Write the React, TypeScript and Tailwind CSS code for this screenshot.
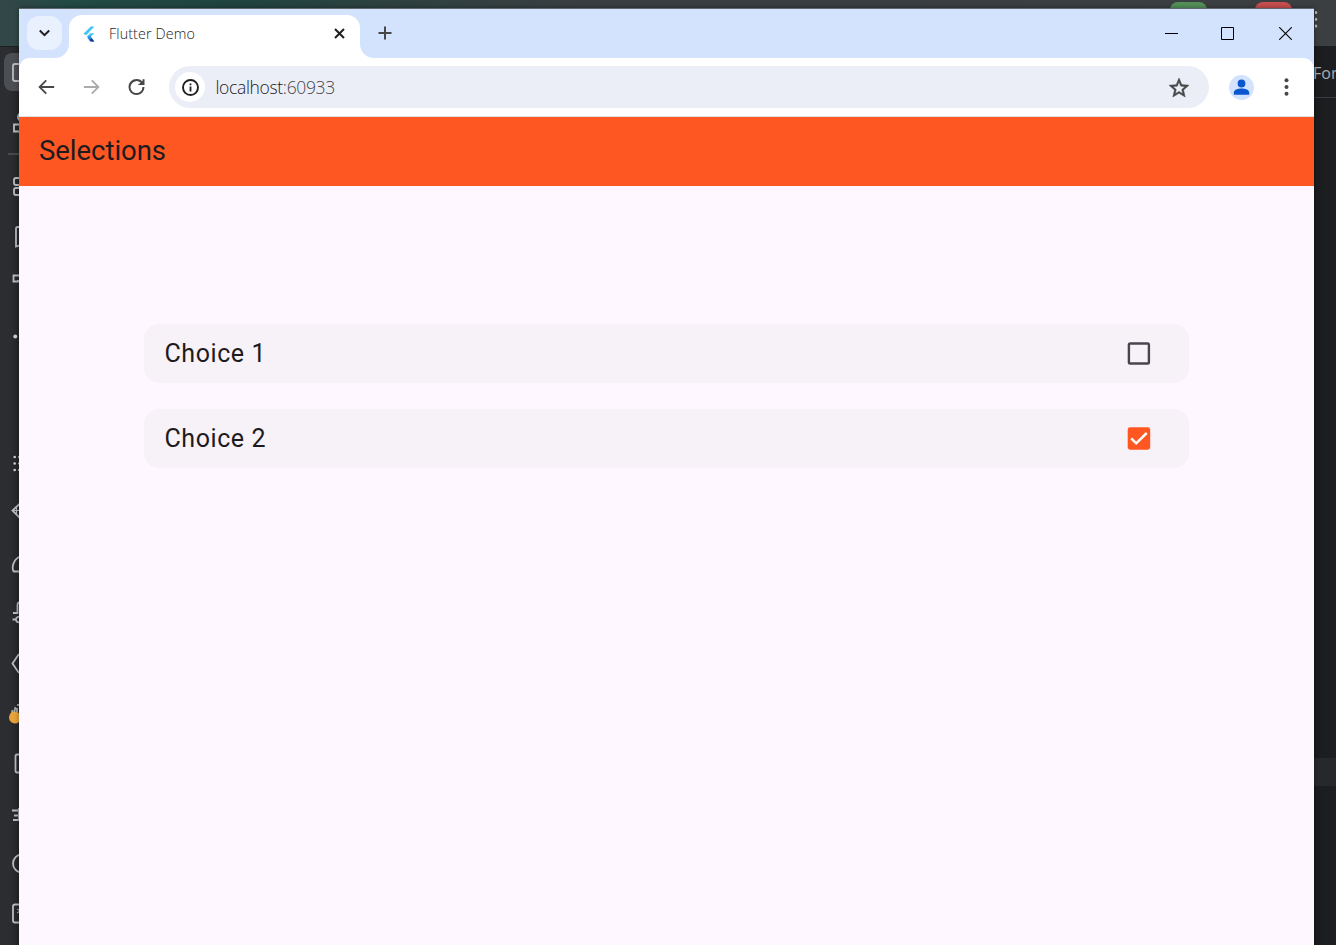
import React from "react";

type RailSlot = { top: number; height: number; art: React.ReactNode };

const railSlots: RailSlot[] = [
  {
    top: 46,
    height: 52,
    art: (
      <>
        <rect x="4" y="53" width="38" height="38" rx="8" fill="#4b4e53" stroke="none" />
        <rect x="13" y="64" width="18" height="17" rx="2" />
      </>
    ),
  },
  {
    top: 98,
    height: 48,
    art: (
      <>
        <circle cx="22" cy="117" r="4" />
        <path d="M20 124.5h-6v7h6" />
      </>
    ),
  },
  { top: 146, height: 16, art: <path d="M8 154h20" stroke="#4a4c50" /> },
  {
    top: 162,
    height: 50,
    art: (
      <>
        <rect x="14" y="178" width="8" height="7" rx="2" />
        <rect x="14" y="188" width="8" height="7" rx="2" />
      </>
    ),
  },
  { top: 212, height: 46, art: <path d="M19 227h-1.5q-1.5 0-1.5 2v17.5l3-1" /> },
  { top: 258, height: 42, art: <path d="M19 275.5h-5.5v6H18v-1.5" /> },
  { top: 300, height: 140, art: <circle cx="15.3" cy="336.5" r="2" fill="#ced0d6" stroke="none" /> },
  {
    top: 440,
    height: 46,
    art: (
      <g fill="#ced0d6" stroke="none">
        <circle cx="14.7" cy="457" r="1.3" />
        <circle cx="14.7" cy="463.5" r="1.3" />
        <circle cx="14.7" cy="470" r="1.3" />
        <circle cx="19" cy="457" r="1" />
        <circle cx="19" cy="463.5" r="1" />
        <circle cx="19" cy="470" r="1" />
      </g>
    ),
  },
  {
    top: 486,
    height: 51,
    art: (
      <>
        <path d="M19.5 504l-7 6.5 7 7" />
        <path d="M13 510.5h7M16.5 507v7" strokeWidth="1.2" />
      </>
    ),
  },
  { top: 537, height: 51, art: <path d="M20 556.5q-5 2-7 8.5-1 5 1 6.5h6" /> },
  {
    top: 588,
    height: 50,
    art: <path d="M19 602.5q-1.5 0-1.5 3v7.500H13M12.5 619.5h4M20 616.5q-4 0-4 3t4 3" />,
  },
  { top: 638, height: 50, art: <path d="M19 654l-6.5 9.5L19 673" /> },
  {
    top: 688,
    height: 50,
    art: (
      <>
        <path d="M11.5 715l1-5M14 713l1.5-6M17 712v-4M18 706v-2" stroke="#a6a8ac" />
        <circle cx="15" cy="717.5" r="6" fill="#e8a33d" stroke="none" />
      </>
    ),
  },
  { top: 738, height: 51, art: <path d="M20 754.5h-3q-1.5 0-1.5 2v14q0 2 1.5 2h3" /> },
  { top: 789, height: 50, art: <path d="M12 810.500h6M14 815.500h4M13 820h5M19 808v13" /> },
  { top: 839, height: 49, art: <circle cx="22" cy="863.5" r="9" /> },
  {
    top: 888,
    height: 57,
    art: (
      <>
        <rect x="13" y="904.5" width="18" height="18" rx="2" />
        <path d="M17 909l3 2-3 2" strokeWidth="1" />
      </>
    ),
  },
];

function IdeBackdrop() {
  return (
    <div className="flex h-full flex-col">
      <div className="flex h-[46px] shrink-0 justify-end bg-[linear-gradient(90deg,#334747_0%,#234a46_5%,#20443f_18%,#304141_31%,#3a3f41_45%,#3c3f41_100%)]">
        <div className="mt-[2px] mr-[48px] h-8 w-[37px] rounded-lg bg-[#549159]" />
        <div className="mt-[2px] mr-[23.5px] h-8 w-[37px] rounded-lg bg-[#c94f4f]" />
        <svg className="mt-[2px] h-9 w-[21px]" viewBox="1315 2 21 36" fill="#b9bcbf">
          <circle cx="1315.8" cy="12.5" r="1.5" />
          <circle cx="1315.8" cy="19.3" r="1.5" />
          <circle cx="1315.8" cy="26" r="1.5" />
        </svg>
      </div>
      <div className="flex min-h-0 flex-1 justify-between bg-[#1e1f22]">
        <div className="flex w-[19px] flex-col overflow-hidden border-t border-[#1e1f22] bg-[linear-gradient(90deg,#2b2d30,#2b2d30_50%,#242628)]">
          {railSlots.map(({ top, height, art }) => (
            <svg
              key={top}
              className="-mt-px mb-px w-[19px] shrink-0"
              height={height}
              viewBox={`0 ${top} 19 ${height}`}
              fill="none"
              stroke="#b9bbc0"
              strokeWidth="1.8"
            >
              {art}
            </svg>
          ))}
        </div>
        <div className="flex w-[22px] flex-col overflow-hidden bg-[linear-gradient(90deg,#1a1b1d,#1e1f22)]">
          <div className="flex h-[52px] items-center border-b border-[#393b40] font-['Open_Sans',sans-serif] text-[16px] whitespace-nowrap text-[#a9abad]">
            <span className="-ml-px pt-[3px]">For</span>
          </div>
          <div className="mt-[660px] h-[28px] bg-[#26282c]" />
        </div>
      </div>
    </div>
  );
}

function FlutterLogo() {
  return (
    <svg className="h-4 w-3" viewBox="0 0 12 16">
      <path d="M7.8.4h3.7L3.4 8.900.2 8z" fill="#44c5f5" />
      <path d="M7.5 7.2h3.8L8 10.6l-2.8 1-1.5-1z" fill="#44c5f5" />
      <path d="M5.4 10.7l1.8-1.2 4.1 5.9H7.7L4.3 12z" fill="#2a8fe0" />
      <path d="M6 13.7l3.2-1 2.1 2.7H7.7z" fill="#0d3c91" />
    </svg>
  );
}

function TabStrip() {
  return (
    <div className="flex h-[49px] shrink-0 items-start bg-[#d3e3fd] pl-2">
      <button className="mt-[7px] flex h-[34px] w-[35px] items-center justify-center rounded-xl bg-[#e9f1fe]">
        <svg className="h-[8px] w-[12px]" viewBox="0.5 0 12 8" fill="none" stroke="#1f1f1f" strokeWidth="2">
          <path d="M1.300 1.5L6 6.2l4.700-4.700" />
        </svg>
      </button>
      <div className="relative mt-[6px] ml-[7px] flex h-[43px] w-[290.5px] items-center rounded-t-[13px] bg-white pr-[14px] pb-[6px] pl-[14px]">
        <svg className="absolute bottom-0 -left-[14px] size-[14px]" viewBox="0 0 14 14" fill="#fff">
          <path d="M14 0v14H0A14 14 0 0014 0z" />
        </svg>
        <svg className="absolute -right-[14px] bottom-0 size-[14px]" viewBox="0 0 14 14" fill="#fff">
          <path d="M0 0v14h14A14 14 0 010 0z" />
        </svg>
        <FlutterLogo />
        <span className="ml-[14px] flex-1 font-['Open_Sans',sans-serif] text-[14.3px] font-[350] tracking-[0.12px] text-[#1a1a1a]">
          Flutter Demo
        </span>
        <svg className="mr-[1px] size-[11px]" viewBox="0 0 11 11" stroke="#1f1f1f" strokeWidth="2">
          <path d="M1 1l9 9M10 1l-9 9" />
        </svg>
      </div>
      <svg className="mt-[17px] ml-[18px] size-[14px]" viewBox="0 0 14 14" stroke="#474747" strokeWidth="2">
        <path d="M7 .5v13M.5 7h13" />
      </svg>
      <div className="ml-auto flex pt-[18px] pr-[22px]">
        <svg className="mr-[43px] size-[13px]" viewBox="0 0 13 13" stroke="#000">
          <path d="M0 6.5h13" />
        </svg>
        <svg className="mr-[45px] size-[13px]" viewBox="0 0 13 13" fill="none" stroke="#000">
          <path d="M.5.5h12v12H.5z" />
        </svg>
        <svg className="size-[13px]" viewBox="0 0 13 13" stroke="#000" strokeWidth="1.1">
          <path d="M.2.2l12.6 12.6M12.8.2L.2 12.8" />
        </svg>
      </div>
    </div>
  );
}

function Toolbar() {
  return (
    <div className="h-[59px] shrink-0 bg-[#d3e3fd]">
      <div className="flex h-full items-start rounded-t-[11px] border-b border-[#dfe1e5] bg-white pt-2">
        <div className="flex h-[42px] flex-1 items-center pl-[17px]">
          <svg className="size-5" viewBox="0 0 24 24" fill="#474747">
            <path d="M21.8 10.9H7.1l6-6L11.5 3.3 2.8 12l8.7 8.7 1.6-1.6-6-6h14.7z" />
          </svg>
          <svg className="ml-[26px] size-5" viewBox="0 0 24 24" fill="#ababab">
            <path d="M2.2 10.9h14.7l-6-6 1.6-1.6 8.7 8.7-8.7 8.7-1.6-1.6 6-6H2.200z" />
          </svg>
          <svg className="ml-[22px] size-[24px]" viewBox="-0.5 0 24 24" fill="#474747">
            <path d="M12 4a8 8 0 108 8h-2a6 6 0 11-1.8-4.2L13.2 10H20V4.2h-2v2.2A8 8 0 0012 4z" />
          </svg>
          <div className="ml-[21px] flex h-[42px] w-[1040px] items-center rounded-full bg-[#ebeef7] pr-[18px] pl-[6px]">
            <span className="flex size-[30px] items-center justify-center rounded-full bg-white">
              <svg className="size-[17px]" viewBox="0 0 17 17">
                <circle cx="8.5" cy="8.5" r="7.5" fill="none" stroke="#1f1f1f" strokeWidth="1.9" />
                <path d="M7.6 7.6h1.8v5H7.6zM7.6 4.4h1.8v1.8H7.6z" fill="#1f1f1f" />
              </svg>
            </span>
            <span className="ml-[10.5px] flex-1 font-['Open_Sans',sans-serif] text-[17.5px] font-[350] tracking-[-0.34px] text-[#1a1a1a]">
              localhost<span className="text-[#474747]">:60933</span>
            </span>
            <svg
              className="mt-px size-[24px]"
              viewBox="0 0 24 24"
              fill="#474747"
              stroke="#474747"
              strokeWidth="0.5"
            >
              <path d="M22 9.24l-7.19-.62L12 2 9.19 8.63 2 9.24l5.46 4.73L5.82 21 12 17.27 18.18 21l-1.63-7.03L22 9.24zM12 15.4l-3.76 2.27 1-4.28-3.32-2.88 4.38-.38L12 6.1l1.71 4.04 4.38.38-3.32 2.88 1 4.28L12 15.4z" />
            </svg>
          </div>
          <svg className="ml-[20px] size-[25px]" viewBox="0 0 25 25">
            <circle cx="12.5" cy="12.5" r="12.5" fill="#d3e3fd" />
            <circle cx="12.5" cy="8.5" r="3.9" fill="#0b57d0" />
            <path d="M4.8 19.800v-2c0-3 4-4.300 7.700-4.300s7.700 1.300 7.700 4.300v2z" fill="#0b57d0" />
          </svg>
          <svg className="ml-[30px] h-[18px] w-[5px]" viewBox="0 0 5 18" fill="#474747">
            <circle cx="2.5" cy="2.2" r="2" />
            <circle cx="2.5" cy="9" r="2" />
            <circle cx="2.5" cy="15.8" r="2" />
          </svg>
        </div>
      </div>
    </div>
  );
}

function Checkbox({ checked }: { checked: boolean }) {
  return (
    <svg className="h-[23px] w-6" viewBox="0 0 24 23" fill="none">
      {checked ? (
        <>
          <rect x="0.7" y="0.3" width="22.5" height="22.4" rx="2.4" fill="#ff5722" />
          <path d="M4.200 11.3l5 5L19.7 6" stroke="#fff" strokeWidth="2.5" />
        </>
      ) : (
        <rect x="1.9" y="1.5" width="20" height="20" rx="1.3" stroke="#49454f" strokeWidth="2.4" />
      )}
    </svg>
  );
}

const choices = [
  { label: "Choice 1", checked: false },
  { label: "Choice 2", checked: true },
];

function FlutterPage() {
  return (
    <div className="flex min-h-0 flex-1 flex-col bg-[#fef7ff] font-[Roboto,sans-serif] text-[#1d1b20]">
      <header className="flex h-[69px] shrink-0 items-center bg-[#ff5722] pb-[2px] pl-5 text-[27.5px] tracking-[-0.03px]">
        Selections
      </header>
      <main className="flex flex-col gap-[26px] pt-[137.5px] pr-[125px] pl-[125px]">
        {choices.map(({ label, checked }) => (
          <label
            key={label}
            className="flex h-[59px] items-center justify-between rounded-[15px] bg-[#f7f1f8] pt-px pr-[38px] pl-[20.4px] text-[25px] tracking-[0.6px]"
          >
            <span>{label}</span>
            <Checkbox checked={checked} />
          </label>
        ))}
      </main>
    </div>
  );
}

export default function App() {
  return (
    <div className="relative h-[945px] w-[1336px] overflow-hidden bg-[#1e1f22]">
      <IdeBackdrop />
      <div className="absolute top-[8px] left-[19px] flex h-[937px] w-[1295px] flex-col border-t border-[#61686d] shadow-[0_0_5px_rgba(0,0,0,0.4)]">
        <TabStrip />
        <Toolbar />
        <FlutterPage />
      </div>
    </div>
  );
}
